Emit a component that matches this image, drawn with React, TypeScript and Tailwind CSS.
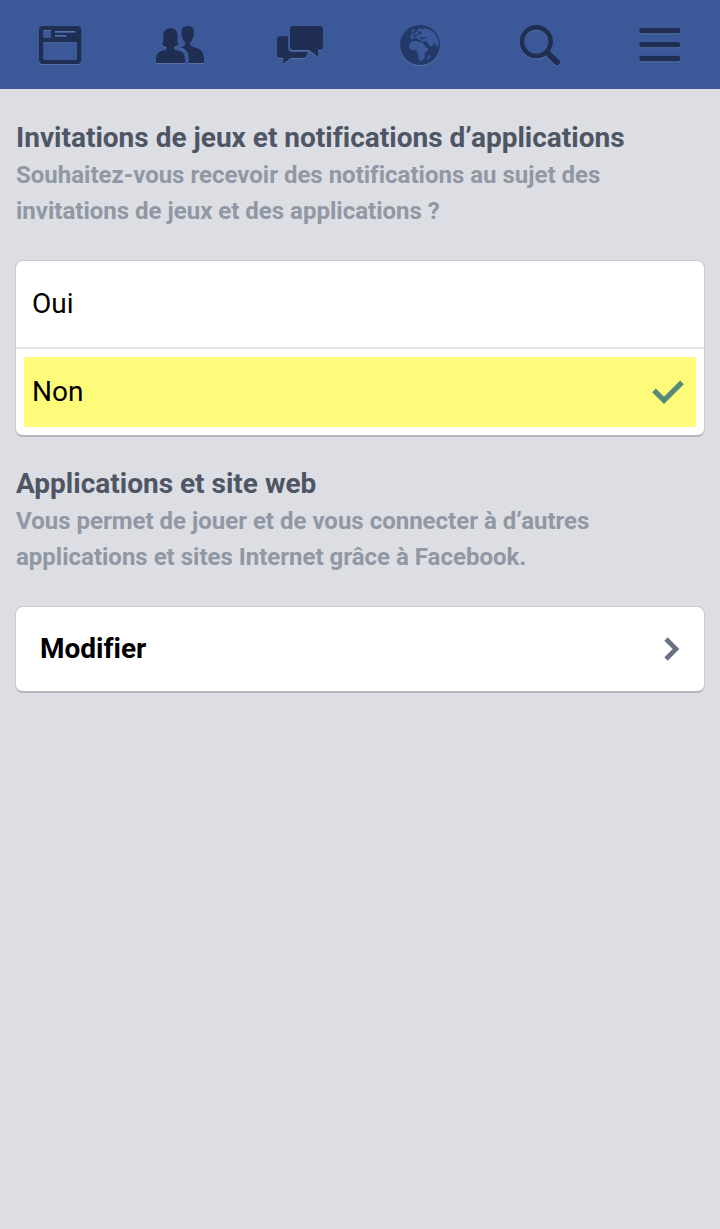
import React, { useState } from "react";

type IconProps = {
  children: React.ReactNode;
};

type SectionHeadingProps = {
  id: string;
  title: string;
  description: string;
};

function NavIcon(props: IconProps) {
  return (
    <svg
      viewBox="0 0 180 180"
      className="w-[60px] h-[60px] drop-shadow-[0_1px_0_rgba(255,255,255,0.15)]"
      fill="#1f2e52"
      aria-hidden="true"
    >
      {props.children}
    </svg>
  );
}

const navItems = [
  {
    label: "Fil d’actualité",
    icon: (
      <path
        fillRule="evenodd"
        d="M38 33H143Q154 33 154 44V136Q154 147 143 147H38Q27 147 27 136V44Q27 33 38 33ZM43 45Q40 45 40 48V66Q40 69 43 69H60Q63 69 63 66V48Q63 45 60 45ZM75 48V54H136V48ZM75 60V66H109V60ZM44 82Q40 82 40 86V131Q40 135 44 135H137Q141 135 141 131V86Q141 82 137 82Z"
      />
    ),
  },
  {
    label: "Invitations",
    icon: (
      <>
        <path d="M18 144Q17 119 24 113C32 107 42 106 49 104V96C43 96 39 93 37 88C41 83 39 73 40 60C41 47 49 40 61 40C75 40 83 48 83 62C83 75 81 83 86 88C83 93 79 95 73 96V104C83 106 93 108 99 113Q106 119 105 144Z" />
        <path d="M116 144C116 125 115 114 107 106C102 101 96 99 92 98L105 91V83C100 79 98 74 98 69C94 67 93 58 95 55C92 42 98 34 114 33C129 34 134 41 131 55C133 58 132 67 128 69C128 74 126 79 121 83V91C128 98 148 100 155 108Q163 117 162 144Z" />
      </>
    ),
  },
  {
    label: "Messages",
    icon: (
      <>
        <path d="M70 33H149Q159 33 159 43V95Q159 105 149 105H144V125L117 105H70Q60 105 60 95V43Q60 33 70 33Z" />
        <path d="M31 64H54V99Q54 111 66 111H112Q111 129 97 129H62L40 147V129H31Q21 129 21 119V74Q21 64 31 64Z" />
      </>
    ),
  },
  {
    label: "Notifications",
    icon: (
      <>
        <circle cx="90" cy="90" r="60" fill="#24386a" />
        <g fill="#3b5998">
          <path d="M65 46L71 41L74 45L70 52H65Z" />
          <path d="M61 66L65 56L76 53L82 48L84 41L91 39L95 43L106 40L123 46Q143 60 146 88L141 98L137 88L132 84L126 94L118 95L110 80L103 78L96 80L91 75L86 75L82 69L76 66L71 72H63Z" />
          <path d="M58 89L64 79L78 77L86 80L99 83L104 91L109 98L115 101L112 108L104 114L104 126L98 137H89L85 128L83 117L80 106L65 105L58 99Z" />
          <path d="M118 119L121 122L118 132L113 134L113 126Z" />
        </g>
        <path
          d="M69 65L75 59L83 62M89 67L96 73L99 68L108 68M89 49L86 57L96 54M107 80L119 94"
          fill="none"
          stroke="#24386a"
          strokeWidth="4"
          strokeLinejoin="round"
        />
      </>
    ),
  },
  {
    label: "Rechercher",
    icon: (
      <g fill="none" stroke="#1f2e52">
        <circle cx="79" cy="80" r="43" strokeWidth="14" />
        <path d="M109 110L117 118" strokeWidth="13" />
        <path d="M117 118L141 142" strokeWidth="18" strokeLinecap="round" />
      </g>
    ),
  },
  {
    label: "Menu",
    icon: (
      <>
        <rect x="28" y="39" width="122" height="16" rx="5" />
        <rect x="28" y="81" width="122" height="16" rx="5" />
        <rect x="28" y="123" width="122" height="16" rx="5" />
      </>
    ),
  },
];

function SectionHeading(props: SectionHeadingProps) {
  return (
    <div className="px-4">
      <h2
        id={props.id}
        className="text-[28px] leading-[38px] font-bold text-[#4e5665]"
      >
        {props.title}
      </h2>
      <p className="max-w-[620px] text-2xl leading-9 font-bold text-[#9197a3]">
        {props.description}
      </p>
    </div>
  );
}

const cardClass =
  "mx-[15px] mt-[31px] rounded-lg border border-b-2 border-[#c8cad1] border-b-[#b5b7be] bg-white";

export default function App() {
  const [answer, setAnswer] = useState("Non");

  return (
    <div className="min-h-screen bg-[#dcdee3] font-['Roboto',sans-serif] text-black [font-variant-ligatures:none]">
      <nav className="grid grid-cols-6 h-[89px] pt-[15px] bg-[#3b5998]">
        {navItems.map((item) => (
          <a
            key={item.label}
            href="#"
            aria-label={item.label}
            className="flex justify-center"
          >
            <NavIcon>{item.icon}</NavIcon>
          </a>
        ))}
      </nav>

      <main className="pt-[30px]">
        <section>
          <SectionHeading
            id="invitations"
            title="Invitations de jeux et notifications d’applications"
            description="Souhaitez-vous recevoir des notifications au sujet des invitations de jeux et des applications ?"
          />
          <div
            role="radiogroup"
            aria-labelledby="invitations"
            className={`${cardClass} divide-y-2 divide-[#e3e4e6]`}
          >
            {["Oui", "Non"].map((option) => (
              <div key={option} className="p-2">
                <label
                  className={`relative flex items-center justify-between h-[70px] px-2 text-[28px] cursor-pointer ${
                    answer === option ? "bg-[#fffb7a]" : ""
                  }`}
                >
                  <input
                    type="radio"
                    name="invitations"
                    value={option}
                    checked={answer === option}
                    onChange={() => setAnswer(option)}
                    className="sr-only"
                  />
                  <span>{option}</span>
                  {answer === option && (
                    <svg
                      viewBox="0 0 96 72"
                      className="w-8 h-6 mr-1"
                      fill="none"
                      stroke="#568c79"
                      strokeWidth="16"
                      aria-hidden="true"
                    >
                      <path d="M6 31L36 61L90 7" />
                    </svg>
                  )}
                </label>
              </div>
            ))}
          </div>
        </section>

        <section className="mt-7">
          <SectionHeading
            id="applications"
            title="Applications et site web"
            description="Vous permet de jouer et de vous connecter à d’autres applications et sites Internet grâce à Facebook."
          />
          <div className={cardClass}>
            <button
              type="button"
              aria-describedby="applications"
              className="flex items-center justify-between w-full h-[84px] px-6 text-[28px] font-bold cursor-pointer"
            >
              Modifier
              <svg
                viewBox="0 0 48 72"
                className="w-4 h-6"
                fill="none"
                stroke="#697183"
                strokeWidth="14"
                aria-hidden="true"
              >
                <path d="M6 6L36 36L6 66" />
              </svg>
            </button>
          </div>
        </section>
      </main>
    </div>
  );
}
